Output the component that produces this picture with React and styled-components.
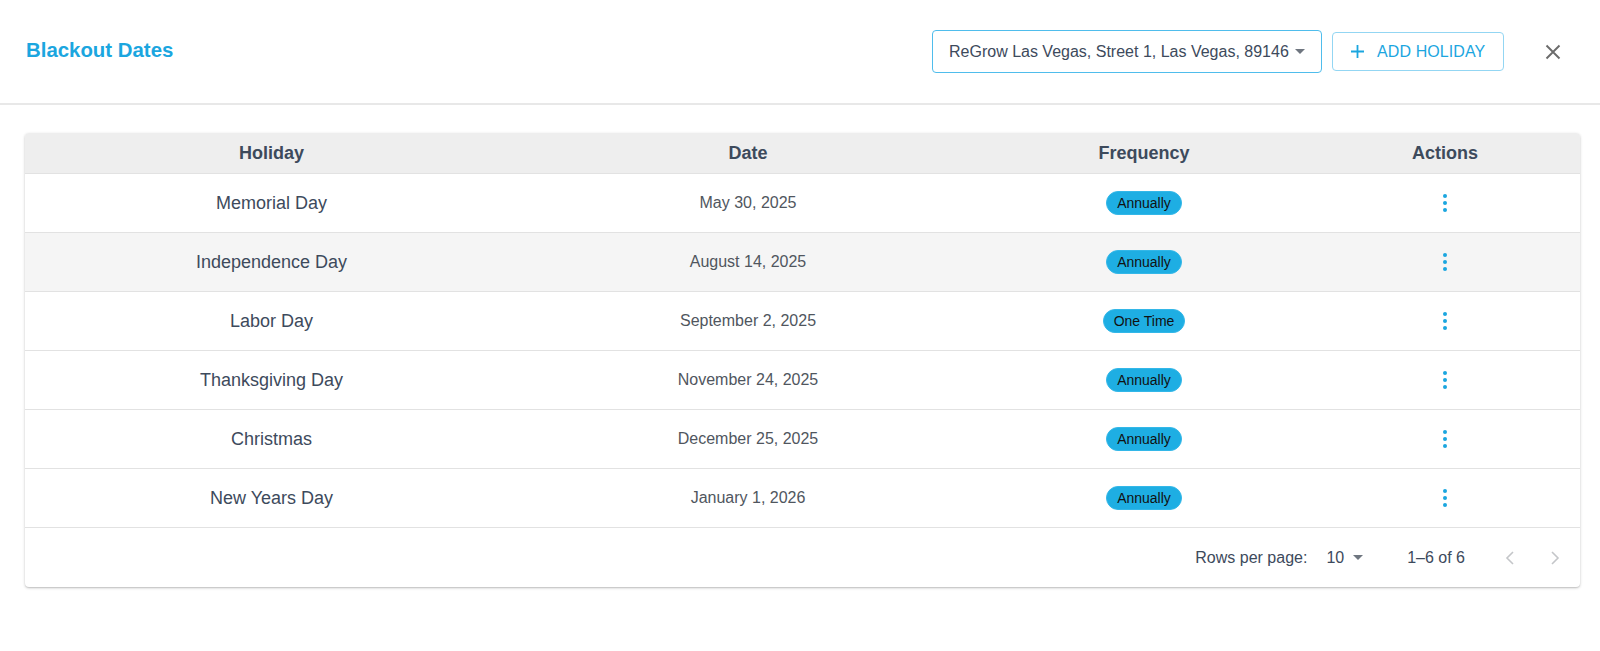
import React from "react";
import styled, { createGlobalStyle } from "styled-components";

const Global = createGlobalStyle`
  html, body { margin: 0; padding: 0; background: #ffffff; }
  body { font-family: "Liberation Sans", Arial, Helvetica, sans-serif; color: #3d4a5c; }
  * { box-sizing: border-box; }
`;

const Page = styled.div`
  width: 1600px;
  min-height: 651px;
  background: #fff;
`;

const Header = styled.header`
  display: flex;
  align-items: center;
  height: 105px;
  padding: 0 27px 0 26px;
  border-bottom: 2px solid #e8e8e8;
`;

const Title = styled.h1`
  flex: 1;
  margin: 0 0 3px 0;
  font-size: 20.4px;
  font-weight: 700;
  color: #1ba6df;
`;

const Select = styled.div`
  display: flex;
  align-items: center;
  justify-content: space-between;
  width: 390px;
  height: 43px;
  padding: 0 16px 0 16px;
  border: 1px solid #4fbdec;
  border-radius: 4px;
  font-size: 16px;
  color: #3d4a5c;
  margin-right: 10px;
`;

const Caret = styled.span`
  width: 0;
  height: 0;
  border-left: 5px solid transparent;
  border-right: 5px solid transparent;
  border-top: 5px solid ${(p) => p.$color || "#6f7680"};
  margin-left: ${(p) => p.$ml || 0}px;
`;

const AddButton = styled.button`
  display: flex;
  align-items: center;
  gap: 12px;
  width: 172px;
  height: 39px;
  padding: 0 0 0 17px;
  background: #fff;
  border: 1px solid #93d6f3;
  border-radius: 4px;
  color: #1ba6df;
  font-family: inherit;
  font-size: 16px;
  font-weight: 400;
  letter-spacing: 0.1px;
`;

const CloseButton = styled.button`
  display: flex;
  align-items: center;
  justify-content: center;
  width: 40px;
  height: 40px;
  margin-left: 29px;
  padding: 0;
  background: none;
  border: none;
`;

const Content = styled.main`
  padding: 28px 20px 0 25px;
`;

const Card = styled.section`
  border-radius: 4px;
  box-shadow: 0 1px 3px rgba(0, 0, 0, 0.22), 0 1px 1px rgba(0, 0, 0, 0.08);
  overflow: hidden;
  background: #fff;
`;

const Row = styled.div`
  display: grid;
  grid-template-columns: 493fr 460fr 332fr 270fr;
  align-items: center;
  height: ${(p) => (p.$head ? 41 : 59)}px;
  background: ${(p) => (p.$head ? "#eeeeee" : p.$shade ? "#f5f5f5" : "#ffffff")};
  border-bottom: 1px solid #e2e2e2;
`;

const HeadCell = styled.div`
  text-align: center;
  font-size: 18px;
  font-weight: 700;
  color: #3d4a5c;
`;

const NameCell = styled.div`
  text-align: center;
  font-size: 18px;
  color: #3d4a5c;
`;

const DateCell = styled.div`
  text-align: center;
  font-size: 16px;
  color: #50565e;
`;

const CenterCell = styled.div`
  display: flex;
  justify-content: center;
  align-items: center;
`;

const Badge = styled.span`
  display: inline-flex;
  align-items: center;
  height: 24px;
  padding: 0 10px;
  border-radius: 12px;
  background: #1eaee3;
  border: 1px solid #33b7e8;
  color: #111;
  font-size: 14px;
`;

const Dots = styled.span`
  display: flex;
  flex-direction: column;
  gap: 3px;
`;

const Dot = styled.span`
  width: 4px;
  height: 4px;
  border-radius: 50%;
  background: #1ba6df;
`;

const Footer = styled.div`
  display: flex;
  align-items: center;
  justify-content: flex-end;
  height: 59px;
  padding-right: 16px;
  font-size: 16px;
  color: #3d4a5c;
`;

const PerPage = styled.div`
  display: flex;
  align-items: center;
  margin-left: 19px;
  margin-right: 44px;
`;

const Range = styled.span`
  margin-right: 36px;
`;

const NavButton = styled.button`
  display: flex;
  align-items: center;
  justify-content: center;
  width: 18px;
  height: 24px;
  padding: 0;
  margin-left: ${(p) => p.$ml || 0}px;
  background: none;
  border: none;
`;

const rows = [
  { name: "Memorial Day", date: "May 30, 2025", freq: "Annually" },
  { name: "Independence Day", date: "August 14, 2025", freq: "Annually", shade: true },
  { name: "Labor Day", date: "September 2, 2025", freq: "One Time" },
  { name: "Thanksgiving Day", date: "November 24, 2025", freq: "Annually" },
  { name: "Christmas", date: "December 25, 2025", freq: "Annually" },
  { name: "New Years Day", date: "January 1, 2026", freq: "Annually" },
];

const Chevron = ({ dir }) => (
  <svg width="10" height="16" viewBox="0 0 10 16">
    <path
      d={dir === "left" ? "M8 2 L2 8 L8 14" : "M2 2 L8 8 L2 14"}
      fill="none"
      stroke="#c4c6c9"
      strokeWidth="1.6"
    />
  </svg>
);

export default function App() {
  return (
    <Page>
      <Global />
      <Header>
        <Title>Blackout Dates</Title>
        <Select>
          <span>ReGrow Las Vegas, Street 1, Las Vegas, 89146</span>
          <Caret />
        </Select>
        <AddButton>
          <svg width="15" height="15" viewBox="0 0 15 15">
            <path d="M7.5 1 V14 M1 7.5 H14" stroke="#1ba6df" strokeWidth="1.8" fill="none" />
          </svg>
          ADD HOLIDAY
        </AddButton>
        <CloseButton aria-label="close">
          <svg width="16" height="16" viewBox="0 0 16 16">
            <path d="M1.5 1.5 L14.5 14.5 M14.5 1.5 L1.5 14.5" stroke="#6b6b6b" strokeWidth="1.9" fill="none" />
          </svg>
        </CloseButton>
      </Header>
      <Content>
        <Card>
          <Row $head>
            <HeadCell>Holiday</HeadCell>
            <HeadCell>Date</HeadCell>
            <HeadCell>Frequency</HeadCell>
            <HeadCell>Actions</HeadCell>
          </Row>
          {rows.map((r) => (
            <Row key={r.name} $shade={r.shade}>
              <NameCell>{r.name}</NameCell>
              <DateCell>{r.date}</DateCell>
              <CenterCell>
                <Badge>{r.freq}</Badge>
              </CenterCell>
              <CenterCell>
                <Dots>
                  <Dot />
                  <Dot />
                  <Dot />
                </Dots>
              </CenterCell>
            </Row>
          ))}
          <Footer>
            <span>Rows per page:</span>
            <PerPage>
              10
              <Caret $ml={9} />
            </PerPage>
            <Range>1–6 of 6</Range>
            <NavButton aria-label="previous">
              <Chevron dir="left" />
            </NavButton>
            <NavButton aria-label="next" $ml={27}>
              <Chevron dir="right" />
            </NavButton>
          </Footer>
        </Card>
      </Content>
    </Page>
  );
}
